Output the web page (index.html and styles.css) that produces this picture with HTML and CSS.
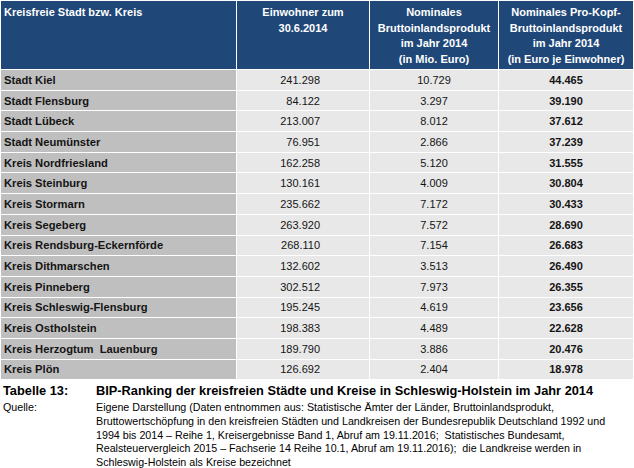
FILE: index.html
```html
<!DOCTYPE html>
<html lang="de">
<head>
<meta charset="utf-8">
<link rel="stylesheet" href="styles.css">
</head>
<body>
<div class="table">
  <div class="th th-left">Kreisfreie Stadt bzw. Kreis</div>
  <div class="th">Einwohner zum<br>30.6.2014</div>
  <div class="th">Nominales<br>Bruttoinlandsprodukt<br>im Jahr 2014<br>(in Mio. Euro)</div>
  <div class="th">Nominales Pro-Kopf-<br>Bruttoinlandsprodukt<br>im Jahr 2014<br>(in Euro je Einwohner)</div>

  <div class="name">Stadt Kiel</div><div class="pop">241.298</div><div class="bip">10.729</div><div class="pk">44.465</div>
  <div class="name">Stadt Flensburg</div><div class="pop">84.122</div><div class="bip">3.297</div><div class="pk">39.190</div>
  <div class="name">Stadt Lübeck</div><div class="pop">213.007</div><div class="bip">8.012</div><div class="pk">37.612</div>
  <div class="name">Stadt Neumünster</div><div class="pop">76.951</div><div class="bip">2.866</div><div class="pk">37.239</div>
  <div class="name">Kreis Nordfriesland</div><div class="pop">162.258</div><div class="bip">5.120</div><div class="pk">31.555</div>
  <div class="name">Kreis Steinburg</div><div class="pop">130.161</div><div class="bip">4.009</div><div class="pk">30.804</div>
  <div class="name">Kreis Stormarn</div><div class="pop">235.662</div><div class="bip">7.172</div><div class="pk">30.433</div>
  <div class="name">Kreis Segeberg</div><div class="pop">263.920</div><div class="bip">7.572</div><div class="pk">28.690</div>
  <div class="name">Kreis Rendsburg-Eckernförde</div><div class="pop">268.110</div><div class="bip">7.154</div><div class="pk">26.683</div>
  <div class="name">Kreis Dithmarschen</div><div class="pop">132.602</div><div class="bip">3.513</div><div class="pk">26.490</div>
  <div class="name">Kreis Pinneberg</div><div class="pop">302.512</div><div class="bip">7.973</div><div class="pk">26.355</div>
  <div class="name">Kreis Schleswig-Flensburg</div><div class="pop">195.245</div><div class="bip">4.619</div><div class="pk">23.656</div>
  <div class="name">Kreis Ostholstein</div><div class="pop">198.383</div><div class="bip">4.489</div><div class="pk">22.628</div>
  <div class="name">Kreis Herzogtum&nbsp; Lauenburg</div><div class="pop">189.790</div><div class="bip">3.886</div><div class="pk">20.476</div>
  <div class="name">Kreis Plön</div><div class="pop">126.692</div><div class="bip">2.404</div><div class="pk">18.978</div>
</div>
<div class="caption">
  <div class="cap-label">Tabelle 13:</div>
  <div class="cap-title">BIP-Ranking der kreisfreien Städte und Kreise in Schleswig-Holstein im Jahr 2014</div>
</div>
<div class="source">
  <div class="src-label">Quelle:</div>
  <div class="src-text">Eigene Darstellung (Daten entnommen aus: Statistische Ämter der Länder, Bruttoinlandsprodukt,<br>Bruttowertschöpfung in den kreisfreien Städten und Landkreisen der Bundesrepublik Deutschland 1992 und<br>1994 bis 2014 – Reihe 1, Kreisergebnisse Band 1, Abruf am 19.11.2016;&nbsp; Statistisches Bundesamt,<br>Realsteuervergleich 2015 – Fachserie 14 Reihe 10.1, Abruf am 19.11.2016);&nbsp; die Landkreise werden in<br>Schleswig-Holstein als Kreise bezeichnet</div>
</div>
</body>
</html>
```

FILE: styles.css
```css
html, body {
  margin: 0;
  padding: 0;
  background: #ffffff;
}
body {
  font-family: "Liberation Sans", Arial, sans-serif;
  font-size: 11px;
  color: #141414;
  width: 634px;
  height: 468px;
  overflow: hidden;
}
.table {
  display: grid;
  grid-template-columns: 235px 132px 128px 134px;
  grid-template-rows: 68px repeat(15, 19.7px);
  gap: 1px;
  padding: 1px 0 0 1px;
  background: #ffffff;
}
.th {
  background: #1f4778;
  color: #ffffff;
  font-weight: bold;
  text-align: center;
  line-height: 15.5px;
  padding-top: 4px;
}
.th-left {
  text-align: left;
  padding-left: 3px;
}
.name, .pop, .bip, .pk {
  display: flex;
  align-items: center;
}
.name {
  background: #bfbfbf;
  font-weight: bold;
  font-size: 11.2px;
  padding-left: 3px;
}
.pop, .bip, .pk {
  background: #e8e8e8;
}
.pop {
  justify-content: flex-end;
  padding-right: 49px;
}
.bip {
  justify-content: center;
}
.pk {
  justify-content: center;
  font-weight: bold;
}
.caption {
  display: flex;
  font-weight: bold;
  font-size: 12.8px;
  margin-top: 4px;
  color: #000;
}
.cap-label {
  width: 93px;
  padding-left: 3px;
  flex: none;
}
.source {
  display: flex;
  font-size: 10.7px;
  line-height: 13.6px;
  margin-top: 3px;
  color: #000;
}
.src-label {
  width: 93px;
  padding-left: 3px;
  flex: none;
}
.src-text {
  white-space: nowrap;
}
```
